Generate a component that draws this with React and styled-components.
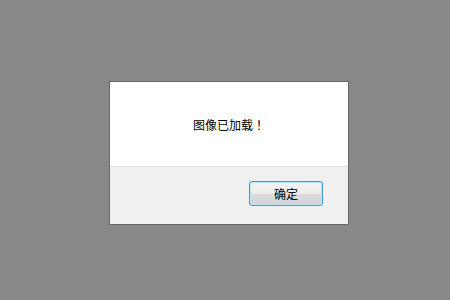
import React from 'react';
import styled, { createGlobalStyle } from 'styled-components';

const GlobalStyle = createGlobalStyle`
  html, body {
    margin: 0;
    padding: 0;
    background: #888888;
    font-family: "Microsoft YaHei", "Noto Sans CJK SC", "Liberation Sans", sans-serif;
  }
`;

const Page = styled.div`
  width: 450px;
  height: 300px;
  box-sizing: border-box;
  padding: 81px 0 0 109px;
  background: #888888;
`;

const Dialog = styled.div`
  width: 240px;
  box-sizing: border-box;
  border: 1px solid #666666;
  background: #ffffff;
  display: flex;
  flex-direction: column;
`;

const Message = styled.div`
  height: 84px;
  display: flex;
  align-items: center;
  justify-content: center;
  font-size: 12px;
  color: #000000;
  text-spacing-trim: space-all;
  border-bottom: 1px solid #dfdfdf;
`;

const Punct = styled.span`
  font-family: "Noto Sans CJK TC", "Noto Sans CJK SC", sans-serif;
`;

const Footer = styled.div`
  height: 57px;
  box-sizing: border-box;
  background: #f0f0f0;
  display: flex;
  justify-content: flex-end;
  align-items: flex-start;
  padding: 14px 25px 0 0;
`;

const Button = styled.button`
  width: 74px;
  height: 25px;
  box-sizing: border-box;
  border: 1px solid #3c9bd6;
  border-radius: 3px;
  box-shadow: inset 0 0 0 1px #b8e6f8;
  background: linear-gradient(to bottom, #f4f4f4 0%, #ececec 50%, #dcdcdc 51%, #d4d4d4 100%);
  font-family: inherit;
  font-size: 12px;
  color: #000000;
  padding: 0;
  cursor: default;
`;

export default function App() {
  return (
    <>
      <GlobalStyle />
      <Page>
        <Dialog>
          <Message>
            图像已加载<Punct>！</Punct>
          </Message>
          <Footer>
            <Button>确定</Button>
          </Footer>
        </Dialog>
      </Page>
    </>
  );
}
